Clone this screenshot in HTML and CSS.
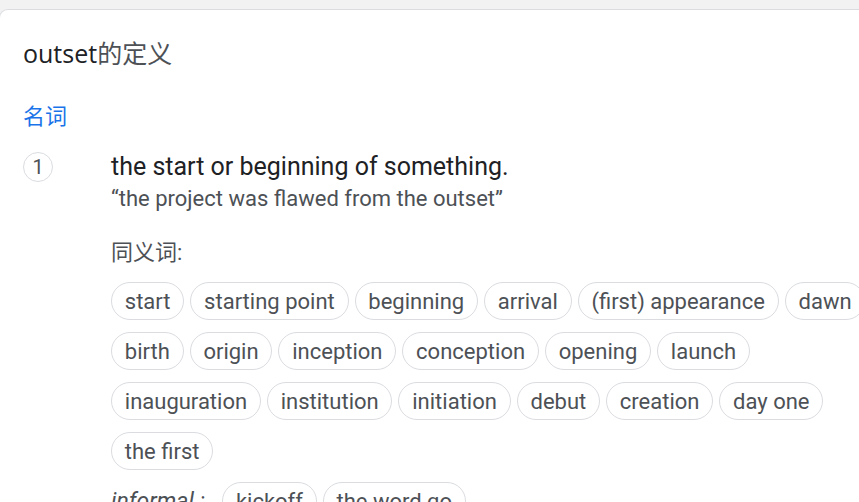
FILE: index.html
```html
<!DOCTYPE html>
<html lang="zh">
<head>
<meta charset="utf-8">
<link rel="stylesheet" href="styles.css">
</head>
<body>
<div class="card">
  <h1 class="title"><span class="word">outset</span><span class="suffix">的定义</span></h1>
  <div class="pos">名词</div>
  <div class="sense">
    <div class="num">1</div>
    <div class="body">
      <div class="def">the start or beginning of something.</div>
      <div class="example">“the project was flawed from the outset”</div>
      <div class="syn-label">同义词:</div>
      <div class="chips">
        <span class="chip">start</span>
        <span class="chip">starting point</span>
        <span class="chip">beginning</span>
        <span class="chip">arrival</span>
        <span class="chip">(first) appearance</span>
        <span class="chip">dawn</span>
        <span class="chip">birth</span>
        <span class="chip">origin</span>
        <span class="chip">inception</span>
        <span class="chip">conception</span>
        <span class="chip">opening</span>
        <span class="chip">launch</span>
        <span class="chip">inauguration</span>
        <span class="chip">institution</span>
        <span class="chip">initiation</span>
        <span class="chip">debut</span>
        <span class="chip">creation</span>
        <span class="chip">day one</span>
        <span class="chip">the first</span>
      </div>
      <div class="informal">
        <span class="register">informal :</span>
        <span class="chip">kickoff</span>
        <span class="chip">the word go</span>
      </div>
    </div>
  </div>
</div>
</body>
</html>
```
FILE: styles.css
```css
html, body {
  margin: 0;
  padding: 0;
  height: 100%;
  overflow: hidden;
}
body {
  background: #f2f2f2;
  font-family: Roboto, "Noto Sans CJK SC", sans-serif;
}
.card {
  margin: 9px 0 0 -1px;
  background: #fff;
  border-top: 1px solid #dadce0;
  border-left: 1px solid #dadce0;
  border-radius: 9px 0 0 0;
  padding: 26px 0 0 23px;
  height: 600px;
  overflow: hidden;
}
.title {
  margin: 0;
  font-family: "Open Sans", "Noto Sans CJK SC", sans-serif;
  font-weight: 400;
  font-size: 25px;
  line-height: 34px;
}
.word { color: #202124; }
.suffix { color: #4d5156; }
.pos {
  margin-top: 33px;
  color: #1a73e8;
  font-size: 22px;
  line-height: 28px;
}
.sense {
  display: flex;
  margin-top: 20px;
}
.num {
  flex: none;
  width: 28px;
  height: 28px;
  border: 1px solid #dadce0;
  border-radius: 50%;
  box-sizing: content-box;
  color: #4d5156;
  font-size: 20px;
  line-height: 28px;
  text-align: center;
  margin-top: 1px;
  margin-right: 58px;
}
.body {
  width: 790px;
  flex: none;
}
.def {
  color: #202124;
  font-size: 25px;
  line-height: 32px;
}
.example {
  color: #4d5156;
  font-size: 22px;
  line-height: 32px;
}
.syn-label {
  margin-top: 22px;
  color: #4d5156;
  font-size: 22px;
  line-height: 32px;
}
.chips {
  display: flex;
  flex-wrap: wrap;
  gap: 12px 6px;
  margin-top: 13px;
}
.chip {
  display: inline-flex;
  align-items: center;
  height: 38px;
  box-sizing: border-box;
  padding: 0 12.8px;
  border: 1px solid #dadce0;
  border-radius: 19px;
  color: #4d5156;
  font-size: 22px;
  white-space: nowrap;
}
.informal {
  display: flex;
  align-items: center;
  gap: 6px;
  margin-top: 12px;
}
.register {
  font-style: italic;
  color: #4d5156;
  font-size: 23px;
  margin-right: 11px;
}
```
